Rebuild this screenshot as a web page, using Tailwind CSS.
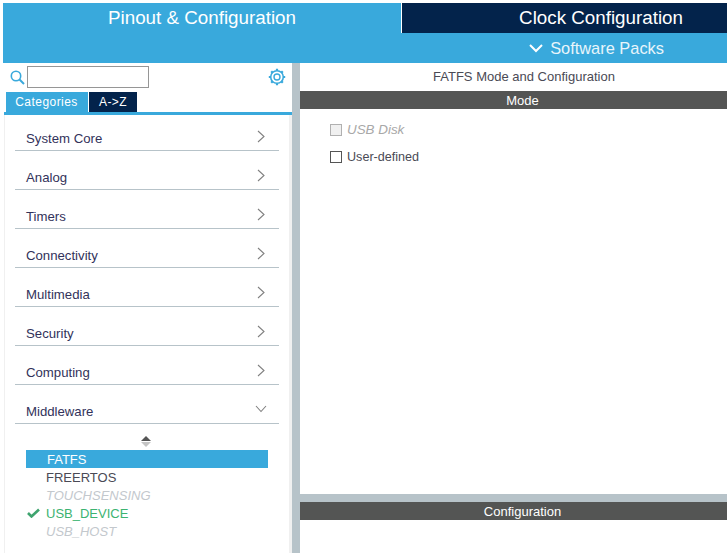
<!DOCTYPE html>
<html lang="en">

<head>
  <meta charset="UTF-8" />
  <title>Pinout &amp; Configuration</title>
  <script src="https://cdn.jsdelivr.net/npm/@tailwindcss/browser@4"></script>
</head>

<body class="bg-white font-['Liberation_Sans',Arial,sans-serif] w-[727px] h-[553px] overflow-hidden">
  <div class="flex flex-col h-[553px] pt-[3px] pl-[3px]">

    <!-- Top tabs -->
    <header class="bg-[#39a9dc] h-[60px] shrink-0 text-white">
      <div class="flex h-[30px]">
        <div class="w-[398px] flex justify-center items-center text-[18.8px]">Pinout &amp; Configuration</div>
        <div class="w-px bg-white"></div>
        <div class="flex-1 bg-[#03234b] flex items-center justify-end pr-[44px] text-[18.8px]">Clock Configuration</div>
      </div>
      <div class="flex h-[30px] items-center justify-end pr-[63px] text-[16.4px] text-[#e8f5fb]">
        <svg class="w-[14px] h-[10px] mr-[7px]" viewBox="0 0 14 10" fill="none" stroke="white" stroke-width="2"><path d="M1 2l6 6 6-6" /></svg>
        Software Packs
      </div>
    </header>

    <div class="flex flex-1 min-h-0">
      <!-- Left panel -->
      <aside class="w-[289px] shrink-0 flex flex-col">
        <div class="flex items-center h-[26px] pl-[7px] pr-[4px] pt-[2px]">
          <svg class="w-[15px] h-[15px] shrink-0" viewBox="0 0 15 15" fill="none" stroke="#39a9dc"><circle cx="6" cy="6" r="4.7" stroke-width="1.6" /><path d="M9.5 9.5l4.5 4.5" stroke-width="2" /></svg>
          <div class="w-[122px] h-[22px] border border-[#969696] ml-[2px]"></div>
          <svg class="w-[18px] h-[18px] ml-auto mr-[2px]" viewBox="0 0 18 18" fill="none" stroke="#39a9dc">
            <circle cx="9" cy="9" r="3" stroke-width="1.4" />
            <circle cx="9" cy="9" r="6.3" stroke-width="1.6" />
            <path d="M9 .8v2M9 15.2v2M.8 9h2M15.2 9h2M3.2 3.2l1.4 1.4M13.4 13.4l1.4 1.4M14.8 3.2l-1.4 1.4M4.6 13.4l-1.4 1.4" stroke-width="2.2" />
          </svg>
        </div>
        <div class="flex h-[20px] pl-[3px] gap-px mt-[3px] text-[12px] text-white tracking-[0.45px]">
          <div class="w-[82px] bg-[#39a9dc] flex items-center justify-center pr-px">Categories</div>
          <div class="w-[48px] bg-[#03234b] flex items-center justify-center">A-&gt;Z</div>
        </div>
        <div class="h-[3px] bg-[#39a9dc] ml-px shrink-0"></div>

        <div class="flex-1 border-l border-r-[3px] border-[#f0f0f0] ml-px pt-[1px]">
          <div id="categories" class="px-[10px]">
            <div class="h-[34px] mt-[1px] flex border-b border-[#b7c3c9] items-end pb-[1px] pl-[11px] pr-[14px] justify-between text-[#32325a] text-[13.2px]"><span>System Core</span><svg class="w-[8px] h-[13px] mb-[6px]" viewBox="0 0 8 13" fill="none" stroke="#808080" stroke-width="1.1"><path d="M1 1l6 5.5-6 5.5" /></svg></div>
            <div class="h-[39px] flex border-b border-[#b7c3c9] items-end pb-[1px] pl-[11px] pr-[14px] justify-between text-[#32325a] text-[13.2px]"><span>Analog</span><svg class="w-[8px] h-[13px] mb-[6px]" viewBox="0 0 8 13" fill="none" stroke="#808080" stroke-width="1.1"><path d="M1 1l6 5.5-6 5.5" /></svg></div>
            <div class="h-[39px] flex border-b border-[#b7c3c9] items-end pb-[1px] pl-[11px] pr-[14px] justify-between text-[#32325a] text-[13.2px]"><span>Timers</span><svg class="w-[8px] h-[13px] mb-[6px]" viewBox="0 0 8 13" fill="none" stroke="#808080" stroke-width="1.1"><path d="M1 1l6 5.5-6 5.5" /></svg></div>
            <div class="h-[39px] flex border-b border-[#b7c3c9] items-end pb-[1px] pl-[11px] pr-[14px] justify-between text-[#32325a] text-[13.2px]"><span>Connectivity</span><svg class="w-[8px] h-[13px] mb-[6px]" viewBox="0 0 8 13" fill="none" stroke="#808080" stroke-width="1.1"><path d="M1 1l6 5.5-6 5.5" /></svg></div>
            <div class="h-[39px] flex border-b border-[#b7c3c9] items-end pb-[1px] pl-[11px] pr-[14px] justify-between text-[#32325a] text-[13.2px]"><span>Multimedia</span><svg class="w-[8px] h-[13px] mb-[6px]" viewBox="0 0 8 13" fill="none" stroke="#808080" stroke-width="1.1"><path d="M1 1l6 5.5-6 5.5" /></svg></div>
            <div class="h-[39px] flex border-b border-[#b7c3c9] items-end pb-[1px] pl-[11px] pr-[14px] justify-between text-[#32325a] text-[13.2px]"><span>Security</span><svg class="w-[8px] h-[13px] mb-[6px]" viewBox="0 0 8 13" fill="none" stroke="#808080" stroke-width="1.1"><path d="M1 1l6 5.5-6 5.5" /></svg></div>
            <div class="h-[39px] flex border-b border-[#b7c3c9] items-end pb-[1px] pl-[11px] pr-[14px] justify-between text-[#32325a] text-[13.2px]"><span>Computing</span><svg class="w-[8px] h-[13px] mb-[6px]" viewBox="0 0 8 13" fill="none" stroke="#808080" stroke-width="1.1"><path d="M1 1l6 5.5-6 5.5" /></svg></div>
            <div class="h-[39px] flex border-b border-[#b7c3c9] items-end pb-[1px] pl-[11px] pr-[14px] justify-between text-[#32325a] text-[13.2px]"><span>Middleware</span><svg class="w-[12px] h-[8px] mb-[9px] -mr-[2px]" viewBox="0 0 12 8" fill="none" stroke="#808080" stroke-width="1.1"><path d="M1 1l5 5.5 5-5.5" /></svg></div>
          </div>

          <!-- scroll arrows -->
          <div class="flex flex-col items-center mt-[12px] gap-px w-[281px]">
            <div class="w-0 h-0 border-x-[5px] border-x-transparent border-b-[5px] border-b-[#555]"></div>
            <div class="w-0 h-0 border-x-[5px] border-x-transparent border-t-[5px] border-t-[#c4c4c4]"></div>
          </div>

          <ul class="ml-[21px] w-[242px] mt-[3px] text-[13px] leading-[19.5px]">
            <li class="h-[18px] bg-[#39a9dc] text-white pl-[21px]">FATFS</li>
            <li class="h-[18px] text-[#4a4a55] pl-[20px]">FREERTOS</li>
            <li class="h-[18px] text-[#c3c8cd] italic pl-[20px]">TOUCHSENSING</li>
            <li class="h-[18px] text-[#3cb371] pl-[20px] relative">
              <svg class="absolute left-[1px] top-[4px] w-[13px] h-[10px]" viewBox="0 0 13 10" fill="none" stroke="#3fa46f" stroke-width="2.6"><path d="M1 5l3.5 3.5L12 1.5" /></svg>
              USB_DEVICE
            </li>
            <li class="h-[18px] text-[#c3c8cd] italic pl-[20px]">USB_HOST</li>
          </ul>
        </div>
      </aside>

      <!-- Vertical splitter -->
      <div class="w-[8px] bg-[#b7c3c9] shrink-0"></div>

      <!-- Right panel -->
      <main class="flex-1 flex flex-col min-w-0">
        <div class="h-[28px] flex items-center justify-center pl-[21px] text-[13px] text-[#4a4a55]">FATFS Mode and Configuration</div>
        <div class="h-[18px] bg-[#545554] text-white text-[13px] leading-[19px] flex items-center justify-center pl-[18px]">Mode</div>
        <div class="flex-1 pl-[30px] pt-[14px]">
          <label class="flex items-center h-[14px] text-[13.4px] text-[#a8a8a8] italic gap-[5px]">
            <span class="w-[12px] h-[12px] border border-[#b0b0b0] bg-[#f0f0f0]"></span><span class="pt-px">USB Disk</span>
          </label>
          <label class="flex items-center h-[14px] mt-[13px] text-[12.6px] text-[#4a4a55] gap-[5px]">
            <span class="w-[12px] h-[12px] border border-[#555] bg-white"></span><span class="pt-px">User-defined</span>
          </label>
        </div>
        <div class="h-[8px] bg-[#b7c3c9] shrink-0"></div>
        <div class="h-[18px] bg-[#545554] text-white text-[13px] leading-[19px] flex items-center justify-center pl-[18px] shrink-0">Configuration</div>
        <div class="h-[33px] shrink-0"></div>
      </main>
    </div>
  </div>
</body>
</html>
